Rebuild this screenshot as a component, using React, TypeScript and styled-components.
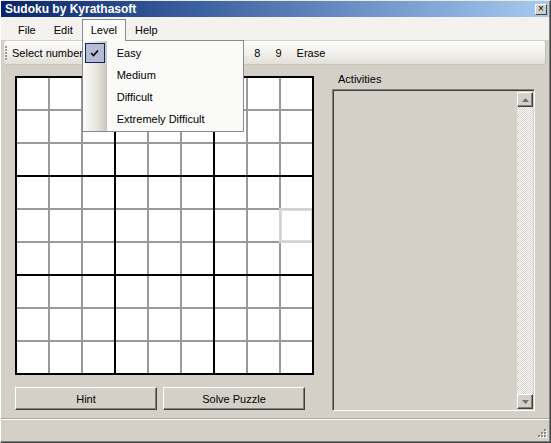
import React from "react";
import styled, { createGlobalStyle, css } from "styled-components";

const GlobalStyle = createGlobalStyle`
  html, body {
    margin: 0;
    padding: 0;
    background: #d4d0c8;
  }
  body {
    font-family: "Liberation Sans", Arial, sans-serif;
    font-size: 11px;
    color: #000;
  }
`;

const levels = ["Easy", "Medium", "Difficult", "Extremely Difficult"];
const digits = ["1", "2", "3", "4", "5", "6", "7", "8", "9"];

const Window = styled.div`
  width: 551px;
  height: 443px;
  box-sizing: border-box;
  display: flex;
  flex-direction: column;
  background: #d4d0c8;
  border-top: 1px solid #ece9e2;
  border-left: 1px solid #ffffff;
  border-right: 1px solid #404040;
  border-bottom: 1px solid #404040;
  box-shadow: inset -1px -1px 0 #808080;
  padding-right: 1px;
  padding-bottom: 1px;
  position: relative;
`;

const TitleBar = styled.div`
  height: 16px;
  display: flex;
  align-items: center;
  padding: 0 2px 0 4px;
  background: linear-gradient(to right, #0a246a 0%, #3a5f9f 35%, #a6caf0 100%);
  color: #fff;
  font-weight: bold;
  font-size: 12px;
`;

const CloseButton = styled.div`
  margin-left: auto;
  width: 12px;
  height: 11px;
  box-sizing: border-box;
  background: #d4d0c8;
  border: 1px solid;
  border-color: #fff #404040 #404040 #fff;
  display: flex;
  align-items: center;
  justify-content: center;
  color: #000;
  font-size: 10px;
  font-weight: normal;
  line-height: 1;
`;

const MenuBar = styled.div`
  height: 23px;
  box-sizing: border-box;
  padding: 2px 0 0 8px;
  display: flex;
  align-items: stretch;
  background: #f3f2ee;
`;

const MenuItem = styled.div<{ $open?: boolean }>`
  position: relative;
  display: flex;
  align-items: center;
  padding: 0 8px;
  border: 1px solid transparent;
  border-bottom: none;
  ${(p) =>
    p.$open &&
    css`
      border-color: #8a8a8a;
      background: #fafaf8;
      z-index: 3;
      &::after {
        content: "";
        position: absolute;
        left: 0;
        right: 0;
        bottom: -1px;
        height: 2px;
        background: #fafaf8;
      }
    `}
`;

const Dropdown = styled.div`
  position: absolute;
  left: -1px;
  top: 100%;
  width: 162px;
  box-sizing: border-box;
  border: 1px solid #8a8a8a;
  background: #fafaf8;
  padding: 1px 0 1px;
  z-index: -1;
  display: flex;
  flex-direction: column;
  background-image: linear-gradient(to right, #fbfbf9 0px, #e6e4dd 14px, #c9c6bc 24px, transparent 24px);
`;

const DropItem = styled.div`
  height: 22px;
  display: flex;
  align-items: center;
  padding-left: 2px;
  white-space: nowrap;
`;

const CheckSlot = styled.div<{ $checked?: boolean }>`
  width: 20px;
  height: 20px;
  box-sizing: border-box;
  margin-right: 12px;
  display: flex;
  align-items: center;
  justify-content: center;
  ${(p) =>
    p.$checked &&
    css`
      background: #b6bdd2;
      border: 1px solid #0a246a;
    `}
`;

const ToolBar = styled.div`
  height: 24px;
  margin: 1px 3px 2px 3px;
  box-sizing: border-box;
  display: flex;
  align-items: center;
  border-radius: 3px;
  background: linear-gradient(to bottom, #fcfcfb 0%, #f3f2ee 45%, #e2e0d8 100%);
  border-right: 1px solid #c2bfb5;
  border-bottom: 1px solid #c8c5bc;
`;

const Gripper = styled.div`
  width: 2px;
  height: 14px;
  margin: 0 1px 0 1px;
  background-image: linear-gradient(to bottom, #9c9a94 2px, transparent 2px);
  background-size: 2px 3px;
`;

const ToolLabel = styled.span`
  padding: 0 16px 0 4px;
`;

const ToolButton = styled.span`
  padding: 0 7.5px;
`;

const Body = styled.div`
  flex: 1;
  display: flex;
  padding: 5px 0 0 14px;
`;

const LeftColumn = styled.div`
  display: flex;
  flex-direction: column;
  padding-top: 4px;
`;

const Board = styled.div`
  display: grid;
  grid-template-columns: repeat(3, auto);
  gap: 2px;
  padding: 2px;
  background: #000;
  align-self: flex-start;
`;

const Block = styled.div`
  display: grid;
  grid-template-columns: repeat(3, 31px);
  grid-auto-rows: 31px;
  gap: 2px;
  background: #9a9a9a;
`;

const Cell = styled.div<{ $focused?: boolean }>`
  background: #fff;
  position: relative;
  ${(p) =>
    p.$focused &&
    css`
      z-index: 1;
      box-shadow: inset 0 0 0 1px #dcdcdc, -2px 0 0 #d2d2d2, 0 -2px 0 #d2d2d2,
        -2px -2px 0 #d2d2d2, 0 2px 0 #d2d2d2, -2px 2px 0 #d2d2d2;
    `}
`;

const ButtonRow = styled.div`
  display: flex;
  gap: 6px;
  margin-top: 12px;
`;

const Button = styled.div`
  width: 142px;
  height: 23px;
  box-sizing: border-box;
  display: flex;
  align-items: center;
  justify-content: center;
  background: #d4d0c8;
  border-top: 1px solid #fff;
  border-left: 1px solid #fff;
  border-right: 1px solid #404040;
  border-bottom: 1px solid #404040;
  box-shadow: inset -1px -1px 0 #808080;
`;

const RightColumn = styled.div`
  margin-left: 18px;
  width: 203px;
  display: flex;
  flex-direction: column;
`;

const PanelLabel = styled.div`
  height: 15px;
  line-height: 15px;
  padding-left: 6px;
`;

const ListBox = styled.div`
  margin-top: 2px;
  height: 322px;
  box-sizing: border-box;
  display: flex;
  justify-content: flex-end;
  background: #d4d0c8;
  border-top: 1px solid #808080;
  border-left: 1px solid #808080;
  border-right: 1px solid #fff;
  border-bottom: 1px solid #fff;
  box-shadow: inset 1px 1px 0 #404040, inset -1px -1px 0 #d4d0c8;
  padding: 2px 1px 1px 2px;
`;

const ScrollBar = styled.div`
  width: 16px;
  display: flex;
  flex-direction: column;
  justify-content: space-between;
  background-image: repeating-conic-gradient(#d4d0c8 0 25%, #ffffff 0 50%);
  background-size: 2px 2px;
`;

const ScrollButton = styled.div`
  width: 16px;
  height: 15px;
  box-sizing: border-box;
  display: flex;
  align-items: center;
  justify-content: center;
  background: #d4d0c8;
  border-top: 1px solid #fff;
  border-left: 1px solid #fff;
  border-right: 1px solid #404040;
  border-bottom: 1px solid #404040;
  box-shadow: inset -1px -1px 0 #808080;
`;

const StatusBar = styled.div`
  height: 23px;
  box-sizing: border-box;
  border-top: 1px solid #a8a59c;
  box-shadow: inset 0 1px 0 #fff;
  display: flex;
  justify-content: flex-end;
  align-items: flex-end;
  padding: 0 2px 1px 0;
`;

const Arrow = ({ up }: { up?: boolean }) => (
  <svg width="7" height="4" viewBox="0 0 7 4">
    <path d={up ? "M3.5 0 L7 4 L0 4 Z" : "M0 0 L7 0 L3.5 4 Z"} fill="#707070" />
  </svg>
);

const Check = () => (
  <svg width="9" height="8" viewBox="0 0 9 8">
    <path d="M1 4 L3.5 6.5 L8 1.5" stroke="#000" strokeWidth="1.6" fill="none" />
  </svg>
);

const SizeGrip = () => (
  <svg width="12" height="12" viewBox="0 0 12 12">
    {[
      [9, 1],
      [6, 4],
      [9, 4],
      [3, 7],
      [6, 7],
      [9, 7],
    ].map(([x, y]) => (
      <g key={`${x}-${y}`}>
        <rect x={x + 1} y={y + 1} width="2" height="2" fill="#fff" />
        <rect x={x} y={y} width="2" height="2" fill="#8a877f" />
      </g>
    ))}
  </svg>
);

export default function App() {
  return (
    <Window>
      <GlobalStyle />
      <TitleBar>
        Sudoku by Kyrathasoft
        <CloseButton>×</CloseButton>
      </TitleBar>
      <MenuBar>
        <MenuItem>File</MenuItem>
        <MenuItem>Edit</MenuItem>
        <MenuItem $open>
          Level
          <Dropdown>
            {levels.map((lvl, i) => (
              <DropItem key={lvl}>
                <CheckSlot $checked={i === 0}>{i === 0 && <Check />}</CheckSlot>
                {lvl}
              </DropItem>
            ))}
          </Dropdown>
        </MenuItem>
        <MenuItem>Help</MenuItem>
      </MenuBar>
      <ToolBar>
        <Gripper />
        <ToolLabel>Select number</ToolLabel>
        {digits.map((d) => (
          <ToolButton key={d}>{d}</ToolButton>
        ))}
        <ToolButton>Erase</ToolButton>
      </ToolBar>
      <Body>
        <LeftColumn>
          <Board>
            {Array.from({ length: 9 }).map((_, b) => (
              <Block key={b}>
                {Array.from({ length: 9 }).map((_, c) => {
                  const row = Math.floor(b / 3) * 3 + Math.floor(c / 3);
                  const col = (b % 3) * 3 + (c % 3);
                  return <Cell key={c} $focused={row === 4 && col === 8} />;
                })}
              </Block>
            ))}
          </Board>
          <ButtonRow>
            <Button>Hint</Button>
            <Button>Solve Puzzle</Button>
          </ButtonRow>
        </LeftColumn>
        <RightColumn>
          <PanelLabel>Activities</PanelLabel>
          <ListBox>
            <ScrollBar>
              <ScrollButton>
                <Arrow up />
              </ScrollButton>
              <ScrollButton>
                <Arrow />
              </ScrollButton>
            </ScrollBar>
          </ListBox>
        </RightColumn>
      </Body>
      <StatusBar>
        <SizeGrip />
      </StatusBar>
    </Window>
  );
}
